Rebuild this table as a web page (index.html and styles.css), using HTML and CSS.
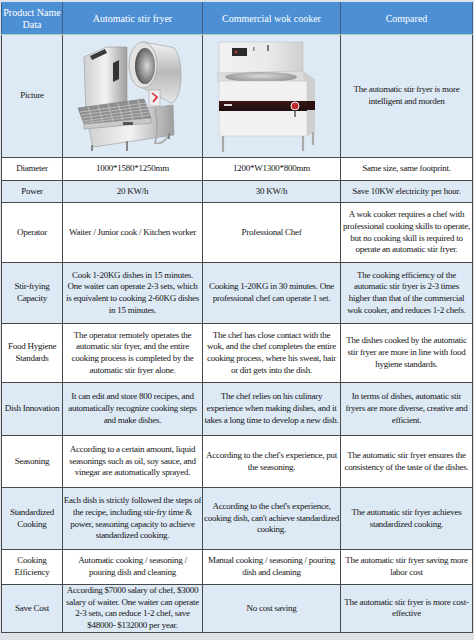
FILE: index.html
```html
<!DOCTYPE html>
<html>
<head>
<meta charset="utf-8">
<link rel="stylesheet" href="styles.css">
</head>
<body>
<div class="frame">
<table class="cmp">
<colgroup><col class="c1"><col class="c2"><col class="c3"><col class="c4"></colgroup>
<tr class="head"><th>Product Name<br>Data</th><th>Automatic stir fryer</th><th>Commercial wok cooker</th><th>Compared</th></tr>
<tr class="alt pic"><td>Picture</td>
<td class="img">
<svg width="140" height="122" viewBox="0 0 140 122">
<defs>
<linearGradient id="mv" x1="0" y1="0" x2="0" y2="1"><stop offset="0" stop-color="#f4f4f4"/><stop offset="0.5" stop-color="#b9b9b9"/><stop offset="1" stop-color="#e6e6e6"/></linearGradient>
<linearGradient id="mh" x1="0" y1="0" x2="1" y2="0"><stop offset="0" stop-color="#cfcfcf"/><stop offset="0.5" stop-color="#f2f2f2"/><stop offset="1" stop-color="#9d9d9d"/></linearGradient>
<radialGradient id="inner" cx="0.6" cy="0.5" r="0.6"><stop offset="0" stop-color="#d9d9d9"/><stop offset="0.7" stop-color="#7b7b7b"/><stop offset="1" stop-color="#4a4a4a"/></radialGradient>
</defs>
<polygon points="21,22 44,12 64,12 64,74 23,80" fill="url(#mh)" stroke="#999" stroke-width="0.6"/>
<polygon points="27,21 42,14 44,18 29,25" fill="#3a3a3a"/>
<polygon points="50,28 56,25 56,44 50,47" fill="#333"/>
<path d="M80,7 L108,12 A10,28 0 0 1 108,68 L80,53 Z" fill="url(#mv)" stroke="#999" stroke-width="0.6"/>
<ellipse cx="80" cy="30" rx="14" ry="23" fill="#e2e2e2" stroke="#a5a5a5" stroke-width="0.8"/>
<ellipse cx="82" cy="31" rx="10" ry="18" fill="url(#inner)"/>
<polygon points="23,80 110,70 111,100 30,112" fill="url(#mh)" stroke="#999" stroke-width="0.6"/>
<polygon points="15,73 81,64 88,83 21,89" fill="#8e8e8e" stroke="#777" stroke-width="0.6"/>
<g stroke="#cfcfcf" stroke-width="0.7">
<line x1="17" y1="77" x2="83" y2="68"/><line x1="18" y1="80" x2="84" y2="71"/><line x1="19" y1="83" x2="85" y2="74"/><line x1="20" y1="86" x2="86" y2="77"/><line x1="21" y1="88" x2="87" y2="80"/>
<line x1="25" y1="72" x2="30" y2="88"/><line x1="35" y1="70" x2="40" y2="87"/><line x1="45" y1="69" x2="50" y2="86"/><line x1="55" y1="68" x2="60" y2="86"/><line x1="65" y1="66" x2="70" y2="85"/><line x1="75" y1="65" x2="80" y2="84"/>
</g>
<polygon points="21,89 88,83 88,88 21,94" fill="#c9c9c9" stroke="#888" stroke-width="0.5"/>
<rect x="60" y="87" width="10" height="3" fill="#555"/>
<rect x="86" y="55" width="11" height="16" fill="#eeeeee" stroke="#999" stroke-width="0.5"/>
<path d="M89,58 L94,62 L90,67" stroke="#d23" stroke-width="1.6" fill="none"/>
<path d="M92,72 Q96,95 92,108 Q100,110 106,100" stroke="#aaa" stroke-width="1.8" fill="none"/>
<g stroke="#888" stroke-width="2"><line x1="29" y1="110" x2="29" y2="116"/><line x1="64" y1="106" x2="64" y2="116"/><line x1="106" y1="98" x2="106" y2="104"/></g>
</svg>
</td>
<td class="img">
<svg width="138" height="122" viewBox="0 0 138 122">
<defs>
<linearGradient id="wb" x1="0" y1="0" x2="1" y2="0"><stop offset="0" stop-color="#f2f2f2"/><stop offset="0.6" stop-color="#e9e9e9"/><stop offset="1" stop-color="#cfcfcf"/></linearGradient>
<radialGradient id="wok" cx="0.5" cy="0.4" r="0.6"><stop offset="0" stop-color="#d9d9d9"/><stop offset="1" stop-color="#8f8f8f"/></radialGradient>
<linearGradient id="rs" x1="0" y1="0" x2="0" y2="1"><stop offset="0" stop-color="#3b1717"/><stop offset="1" stop-color="#1d0d0d"/></linearGradient>
</defs>
<rect x="16" y="7" width="84" height="34" fill="url(#wb)" stroke="#c2c2c2" stroke-width="0.6"/>
<rect x="29" y="13" width="15" height="8" fill="#2c2c2c"/>
<circle cx="33" cy="17" r="1.3" fill="#c33"/>
<rect x="64" y="10" width="2" height="6" fill="#777"/>
<rect x="50" y="12" width="1.5" height="4" fill="#888"/>
<polygon points="14,38 100,36 112,45 16,48" fill="#dcdcdc" stroke="#bbb" stroke-width="0.5"/>
<ellipse cx="58" cy="42" rx="36" ry="5" fill="url(#wok)"/>
<polygon points="100,37 112,45 112,97 104,101" fill="#cfcfcf"/>
<rect x="16" y="46" width="88" height="55" fill="#f1f1f1" stroke="#c8c8c8" stroke-width="0.5"/>
<rect x="16" y="66" width="88" height="10" fill="url(#rs)"/>
<rect x="104" y="66" width="8" height="9" fill="#2a1010"/>
<circle cx="92" cy="71" r="4" fill="#c0262b" stroke="#f2f2f2" stroke-width="1"/>
<line x1="92" y1="75" x2="92" y2="82" stroke="#333" stroke-width="1.2"/>
<rect x="21" y="69" width="8" height="2" fill="#ddd"/>
<g stroke="#a9a9a9" stroke-width="2.2"><line x1="20" y1="101" x2="20" y2="117"/><line x1="100" y1="101" x2="100" y2="116"/><line x1="110" y1="97" x2="110" y2="110"/></g>
</svg>
</td>
<td>The automatic stir fryer is more<br>intelligent and morden</td></tr>
<tr class="r-dia"><td>Diameter</td><td>1000*1580*1250mm</td><td>1200*W1300*800mm</td><td>Same size, same footprint.</td></tr>
<tr class="alt r-pow"><td>Power</td><td>20 KW/h</td><td>30 KW/h</td><td>Save 10KW electricity per hour.</td></tr>
<tr class="r-op"><td>Operator</td><td>Waiter / Junior cook / Kitchen worker</td><td>Professional Chef</td><td>A wok cooker requires a chef with<br>professional cooking skills to operate,<br>but no cooking skill is required to<br>operate an automatic stir fryer.</td></tr>
<tr class="alt r-stir"><td>Stir-frying<br>Capacity</td><td>Cook 1-20KG dishes in 15 minutes.<br>One waiter can operate 2-3 sets, which<br>is equivalent to cooking 2-60KG dishes<br>in 15 minutes.</td><td>Cooking 1-20KG in 30 minutes. One<br>professional chef can operate 1 set.</td><td>The cooking efficiency of the<br>automatic stir fryer is 2-3 times<br>higher than that of the commercial<br>wok cooker, and reduces 1-2 chefs.</td></tr>
<tr class="r-food"><td>Food Hygiene<br>Standards</td><td>The operator remotely operates the<br>automatic stir fryer, and the entire<br>cooking process is completed by the<br>automatic stir fryer alone.</td><td>The chef has close contact with the<br>wok, and the chef completes the entire<br>cooking process, where his sweat, hair<br>or dirt gets into the dish.</td><td>The dishes cooked by the automatic<br>stir fryer are more in line with food<br>hygiene standards.</td></tr>
<tr class="alt r-dish"><td>Dish Innovation</td><td>It can edit and store 800 recipes, and<br>automatically recognize cooking steps<br>and make dishes.</td><td>The chef relies on his culinary<br>experience when making dishes, and it<br>takes a long time to develop a new dish.</td><td>In terms of dishes, automatic stir<br>fryers are more diverse, creative and<br>efficient.</td></tr>
<tr class="r-season"><td>Seasoning</td><td>According to a certain amount, liquid<br>seasonings such as oil, soy sauce, and<br>vinegar are automatically sprayed.</td><td>According to the chef's experience, put<br>the seasoning.</td><td>The automatic stir fryer ensures the<br>consistency of the taste of the dishes.</td></tr>
<tr class="alt r-std"><td>Standardized<br>Cooking</td><td>Each dish is strictly followed the steps of<br>the recipe, including stir-fry time &amp;<br>power, seasoning capacity to achieve<br>standardized cooking.</td><td>According to the chef's experience,<br>cooking dish, can't achieve standardized<br>cooking.</td><td>The automatic stir fryer achieves<br>standardized cooking.</td></tr>
<tr class="r-eff"><td>Cooking<br>Efficiency</td><td>Automatic cooking / seasoning /<br>pouring dish and cleaning</td><td>Manual cooking / seasoning / pouring<br>dish and cleaning</td><td>The automatic stir fryer saving more<br>labor cost</td></tr>
<tr class="alt r-save"><td>Save Cost</td><td>According $7000 salary of chef, $3000<br>salary of waiter. One waiter can operate<br>2-3 sets, can reduce 1-2 chef, save<br>$48000- $132000 per year.</td><td>No cost saving</td><td>The automatic stir fryer is more cost-<br>effective</td></tr>
</table>
</div>
</body>
</html>
```
FILE: styles.css
```css
html, body { margin: 0; padding: 0; }
body {
  background: #dde2e8;
  width: 474px;
  height: 640px;
  overflow: hidden;
  font-family: "Liberation Serif", "Times New Roman", serif;
}
.frame {
  padding: 2px 0 0 1px;
}
.cmp {
  border-collapse: collapse;
  table-layout: fixed;
  width: 471px;
  font-size: 9px;
  letter-spacing: -0.25px;
  line-height: 11.7px;
  color: #141414;
}
.c1 { width: 61px; }
.c2 { width: 140px; }
.c3 { width: 138px; }
.c4 { width: 132px; }
.cmp td, .cmp th {
  border: 1px solid #4a4a4a;
  text-align: center;
  vertical-align: middle;
  padding: 0;
  white-space: nowrap;
  overflow: hidden;
  background: #ffffff;
}
.cmp tr.alt td { background: #dde9f5; }
.cmp th {
  background: #4d8fd4;
  color: #ffffff;
  font-weight: normal;
  font-size: 10px;
  letter-spacing: 0;
  line-height: 12px;
  border-color: #4d8fd4 #3d5f85 #a9d0bf #3d5f85;
}
.head { height: 32px; }
.pic { height: 123px; }
.img { line-height: 0; }
.img svg { display: block; }
.r-dia { height: 23px; }
.r-pow { height: 22px; }
.r-op { height: 60px; }
.r-stir { height: 61px; }
.r-food { height: 59px; }
.r-dish { height: 53px; }
.r-season { height: 52px; }
.r-std { height: 62px; }
.r-eff { height: 35px; }
.r-save { height: 46px; }
```
